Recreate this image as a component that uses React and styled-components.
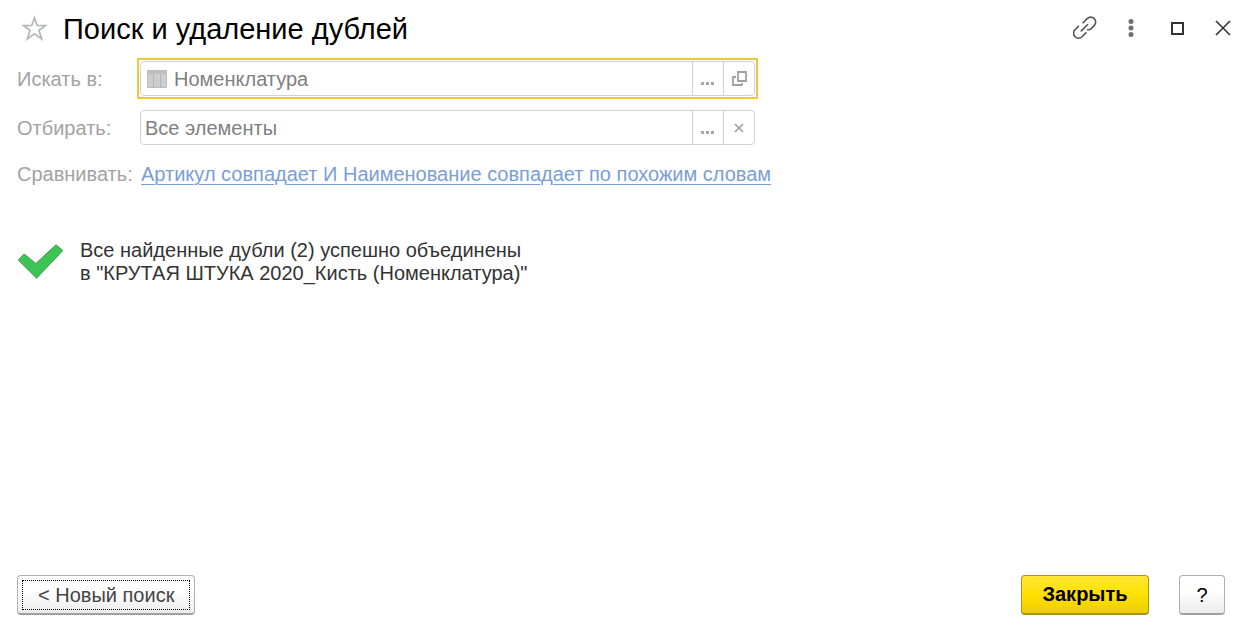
import React, { useState } from 'react';
import styled, { createGlobalStyle } from 'styled-components';

const GlobalStyle = createGlobalStyle`
  * {
    box-sizing: border-box;
  }
  body {
    margin: 0;
    background: #fff;
    font-family: 'Liberation Sans', Arial, sans-serif;
    font-size: 20px;
  }
  button,
  input {
    font: inherit;
  }
`;

const Page = styled.div`
  display: flex;
  flex-direction: column;
  min-height: 100vh;
`;

const Header = styled.header`
  display: flex;
  align-items: center;
  height: 58px;
  padding: 0 6px 2px 20px;
`;
const IconButton = styled.button`
  display: flex;
  align-items: center;
  justify-content: center;
  width: ${({ $width }) => $width || 46}px;
  height: 40px;
  padding: 0;
  border: 0;
  background: none;
  color: #333;
  cursor: pointer;
`;
const Title = styled.h1`
  flex: 1;
  margin: 0;
  padding: 2px 0 0 15px;
  font-size: 29px;
  font-weight: 400;
  line-height: 32px;
  color: #000;
`;

const Form = styled.form`
  display: grid;
  grid-template-columns: 120px minmax(0, 621px);
  row-gap: 8px;
  align-items: center;
  padding: 0 17px;
`;
const Label = styled.label`
  padding-top: 1px;
  color: #a3a3a3;
`;
const FocusFrame = styled.div`
  padding: 1px;
  border: 2px solid ${({ $active }) => ($active ? '#ecc83f' : 'transparent')};
`;
const Field = styled.div`
  display: flex;
  align-items: center;
  height: 35px;
  border: 1px solid #d2d2d2;
  border-radius: 4px;
`;
const FieldIcon = styled.span`
  display: flex;
  margin: 0 3px 0 6px;
`;
const Input = styled.input`
  flex: 1;
  min-width: 0;
  height: 100%;
  padding: 2px 4px 0;
  border: 0;
  outline: 0;
  background: none;
  color: #808080;
`;
const FieldButton = styled.button`
  display: flex;
  align-items: center;
  justify-content: center;
  width: 31px;
  height: 100%;
  padding: 0;
  border: 0;
  border-left: 1px solid #d2d2d2;
  background: none;
  color: #a0a0a0;
  cursor: pointer;
`;
const CompareLink = styled.a`
  justify-self: start;
  margin-left: 4px;
  line-height: 36px;
  white-space: nowrap;
  color: #7a9ed6;
  text-decoration: underline;
  text-decoration-thickness: 1px;
  text-underline-offset: 3px;
`;

const Result = styled.section`
  display: flex;
  align-items: center;
  gap: 16px;
  flex-shrink: 0;
  padding: 46px 17px 0;
`;
const ResultText = styled.p`
  margin: 0;
  padding-top: 1px;
  line-height: 23px;
  color: #333;
`;

const Footer = styled.footer`
  display: flex;
  align-items: center;
  margin-top: auto;
  padding: 0 27px 17px 17px;
`;
const Button = styled.button`
  height: 40px;
  padding: 0 16px;
  border: 1px solid #b0b0b0;
  border-bottom: 2px solid #a0a0a0;
  border-radius: 4px;
  background: linear-gradient(#fff 40%, #ececec);
  color: #000;
  cursor: pointer;
`;
const BackButton = styled(Button)`
  padding: 4px;
  color: #444;
`;
const DottedFrame = styled.span`
  display: flex;
  align-items: center;
  justify-content: center;
  height: 30px;
  padding: 0 15px;
  border: 1px dotted #000;
`;
const CloseButton = styled(Button)`
  width: 128px;
  margin: 0 30px 0 auto;
  border-color: #a8941c;
  background: linear-gradient(#ffe838, #ffe000 50%, #ecce00);
  font-weight: 700;
`;
const HelpButton = styled(Button)`
  width: 46px;
  padding: 2px 0 0;
`;

const StarIcon = () => (
  <svg width="28" height="28" viewBox="0 0 28 28" fill="none" stroke="#b4b8bc" strokeWidth="1.8">
    <path d="M14.5 4 L17.2 11.4 L25.5 11.5 L19 16.4 L21.7 25 L14.5 19.8 L7.3 25 L10 16.4 L3.5 11.5 L11.8 11.4 Z" />
  </svg>
);

// two open chain halves with a bar between them
const LinkIcon = () => (
  <svg width="24" height="24" viewBox="0 0 24 24" fill="none" stroke="#555" strokeWidth="1.6">
    <path d="M9.6 7.2 L14.2 2.6 A4.9 4.9 0 0 1 21.2 9.6 L18 12.8 Q16.2 14.2 14 13.4" />
    <path d="M13.4 16.4 L9 20.8 A4.9 4.9 0 0 1 2 13.8 L5.4 10.4 L6 10" />
    <path d="M7.8 15.4 L15 8.2" />
  </svg>
);

const MoreIcon = () => (
  <svg width="6" height="20" viewBox="0 0 6 20" fill="#707070">
    <circle cx="3" cy="3.6" r="2.5" />
    <circle cx="3" cy="10" r="2.5" />
    <circle cx="3" cy="16.4" r="2.5" />
  </svg>
);

const MaximizeIcon = () => (
  <svg width="14" height="14" viewBox="0 0 14 14" fill="none" stroke="#333" strokeWidth="2">
    <path d="M2 2 H13 V13 H2 Z" />
  </svg>
);

const CloseIcon = () => (
  <svg width="16" height="16" viewBox="0 0 16 16" stroke="#333" strokeWidth="1.6">
    <path d="M1 1 L15 15 M15 1 L1 15" />
  </svg>
);

const TableIcon = () => (
  <svg width="20" height="18" viewBox="0 0 20 18">
    <rect width="20" height="18" rx="1" fill="#cbcdcf" />
    <path d="M0 1 a1 1 0 0 1 1 -1 H19 a1 1 0 0 1 1 1 V4 H0 Z" fill="#bfc0be" />
    <path d="M6.5 4 V17 M13.5 4 V17" stroke="#b0b5bb" />
    <rect x="0.5" y="0.5" width="19" height="17" rx="1" fill="none" stroke="#babdbf" />
  </svg>
);

const DotsIcon = () => (
  <svg width="14" height="18" viewBox="0 0 14 18" fill="#a6a6a6">
    <path d="M0 12h3v3H0z M5 12h3v3H5z M10 12h3v3h-3z" />
  </svg>
);

const OpenIcon = () => (
  <svg width="16" height="16" viewBox="0 0 16 16" fill="none" stroke="#a0a0a0" strokeWidth="1.8">
    <path d="M7 1 H15 V10 H7 Z" />
    <path d="M5 6 H2 V14 H11 V12" />
  </svg>
);

const ClearIcon = () => (
  <svg width="10" height="10" viewBox="0 0 10 10" stroke="#a0a0a0" strokeWidth="1.7">
    <path d="M1 1 L9 9 M9 1 L1 9" />
  </svg>
);

const CheckIcon = () => (
  <svg width="47" height="36" viewBox="0 0 47 36">
    <path
      d="M1.3 16 L7.2 10 L18.8 19.5 L39 0.8 L45.8 6.6 L19.6 34.2 Z"
      fill="#3cc455"
      stroke="#3f9a4c"
      strokeLinejoin="round"
    />
  </svg>
);

const App = () => {
  const [source, setSource] = useState('Номенклатура');
  const [filter, setFilter] = useState('Все элементы');

  return (
    <Page>
      <GlobalStyle />
      <Header>
        <IconButton $width={28} aria-label="Добавить в избранное">
          <StarIcon />
        </IconButton>
        <Title>Поиск и удаление дублей</Title>
        <IconButton aria-label="Получить ссылку">
          <LinkIcon />
        </IconButton>
        <IconButton aria-label="Ещё">
          <MoreIcon />
        </IconButton>
        <IconButton aria-label="Развернуть">
          <MaximizeIcon />
        </IconButton>
        <IconButton aria-label="Закрыть окно">
          <CloseIcon />
        </IconButton>
      </Header>

      <Form onSubmit={e => e.preventDefault()}>
        <Label htmlFor="source">Искать в:</Label>
        <FocusFrame $active>
          <Field>
            <FieldIcon>
              <TableIcon />
            </FieldIcon>
            <Input id="source" value={source} onChange={e => setSource(e.target.value)} />
            <FieldButton type="button" aria-label="Выбрать">
              <DotsIcon />
            </FieldButton>
            <FieldButton type="button" aria-label="Открыть">
              <OpenIcon />
            </FieldButton>
          </Field>
        </FocusFrame>

        <Label htmlFor="filter">Отбирать:</Label>
        <FocusFrame>
          <Field>
            <Input id="filter" value={filter} onChange={e => setFilter(e.target.value)} />
            <FieldButton type="button" aria-label="Выбрать">
              <DotsIcon />
            </FieldButton>
            <FieldButton type="button" aria-label="Очистить" onClick={() => setFilter('')}>
              <ClearIcon />
            </FieldButton>
          </Field>
        </FocusFrame>

        <Label as="span" id="compare-label">
          Сравнивать:
        </Label>
        <CompareLink href="#compare" aria-describedby="compare-label">
          Артикул совпадает И Наименование совпадает по похожим словам
        </CompareLink>
      </Form>

      <Result>
        <CheckIcon />
        <ResultText>
          Все найденные дубли (2) успешно объединены
          <br />в &quot;КРУТАЯ ШТУКА 2020_Кисть (Номенклатура)&quot;
        </ResultText>
      </Result>

      <Footer>
        <BackButton type="button">
          <DottedFrame>&lt; Новый поиск</DottedFrame>
        </BackButton>
        <CloseButton type="button">Закрыть</CloseButton>
        <HelpButton type="button" aria-label="Справка">
          ?
        </HelpButton>
      </Footer>
    </Page>
  );
};

export default App;
